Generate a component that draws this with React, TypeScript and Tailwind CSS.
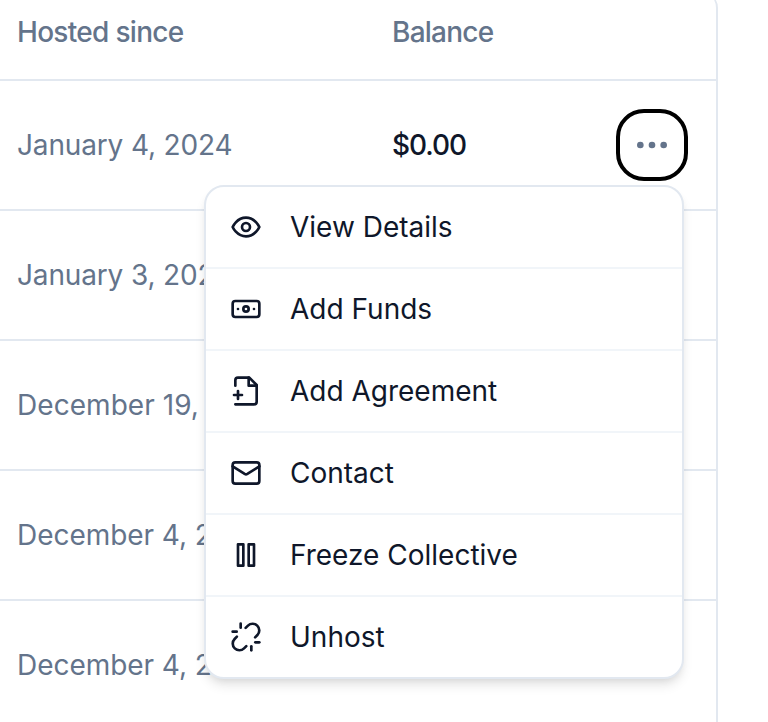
import React from 'react';
import { Banknote, Mail, MoreHorizontal, Unlink } from 'lucide-react';

function Glyph({ children }: { children: React.ReactNode }) {
  return (
    <svg width="32" height="32" viewBox="0 0 24 24" fill="none" stroke="currentColor" strokeWidth="2" strokeLinecap="round" strokeLinejoin="round">
      {children}
    </svg>
  );
}

const EyeIcon = () => (
  <Glyph>
    <path d="M2 12s3-7 10-7 10 7 10 7-3 7-10 7-10-7-10-7Z" />
    <circle cx="12" cy="12" r="3" />
  </Glyph>
);

const FilePlusIcon = () => (
  <Glyph>
    <path d="M4 22h14a2 2 0 0 0 2-2V7.5L14.5 2H6a2 2 0 0 0-2 2v4" />
    <path d="M14 2v6h6" />
    <path d="M3 15h6" />
    <path d="M6 12v6" />
  </Glyph>
);

const PauseIcon = () => (
  <Glyph>
    <rect width="4" height="16" x="6" y="4" />
    <rect width="4" height="16" x="14" y="4" />
  </Glyph>
);

const rows = [
  { date: 'January 4, 2024', spacing: 'tracking-[-0.15px]' },
  { date: 'January 3, 2024', spacing: 'tracking-[-0.15px]' },
  { date: 'December 19, 2023', spacing: 'tracking-[0.05px]' },
  { date: 'December 4, 2023', spacing: 'tracking-[-0.05px]' },
  { date: 'December 4, 2023', spacing: 'tracking-[-0.05px]' },
];

const actions = [
  { label: 'View Details', icon: <EyeIcon /> },
  { label: 'Add Funds', icon: <Banknote size={32} /> },
  { label: 'Add Agreement', icon: <FilePlusIcon /> },
  { label: 'Contact', icon: <Mail size={32} /> },
  { label: 'Freeze Collective', icon: <PauseIcon /> },
  { label: 'Unhost', icon: <Unlink size={32} /> },
];

export default function App() {
  return (
    <div className="relative h-[722px] w-[768px] overflow-hidden bg-white font-['Inter',sans-serif] text-[28px] leading-10 text-[#64748b]">
      <div className="-mt-2 h-[740px] w-[718px] rounded-tr-2xl border-r-2 border-[#e2e8f0]">
        <div className="flex h-[89px] items-end border-b-2 border-[#e2e8f0] pb-[27px] pl-[17px] font-medium">
          <div className="w-[375px] tracking-[-0.7px]">Hosted since</div>
          <div className="tracking-[-0.75px]">Balance</div>
        </div>
        {rows.map(({ date, spacing }, i) => (
          <div key={i} className="flex h-[130px] items-center border-b-2 border-[#e2e8f0] pl-[17px]">
            <div className={`w-[375px] ${spacing}`}>{date}</div>
            {i === 0 && (
              <>
                <div className="w-[224px] font-medium tracking-[-1.05px] text-[#0f172a]">$0.00</div>
                <button className="flex size-[72px] items-center justify-center rounded-[28px] border-4 border-black">
                  <MoreHorizontal size={40} />
                </button>
              </>
            )}
          </div>
        ))}
      </div>
      <div className="absolute left-[204px] top-[185px] w-[480px] overflow-hidden rounded-[20px] border-2 border-[#e2e8f0] bg-white text-[#0f172a] shadow-[0_8px_12px_-2px_rgba(0,0,0,0.1),0_4px_8px_-4px_rgba(0,0,0,0.1)]">
        {actions.map(({ label, icon }) => (
          <div key={label} className="flex h-[82px] items-center gap-7 border-b-2 border-[#f1f5f9] pl-6 last:h-[80px] last:border-b-0">
            {icon}
            <span>{label}</span>
          </div>
        ))}
      </div>
    </div>
  );
}
